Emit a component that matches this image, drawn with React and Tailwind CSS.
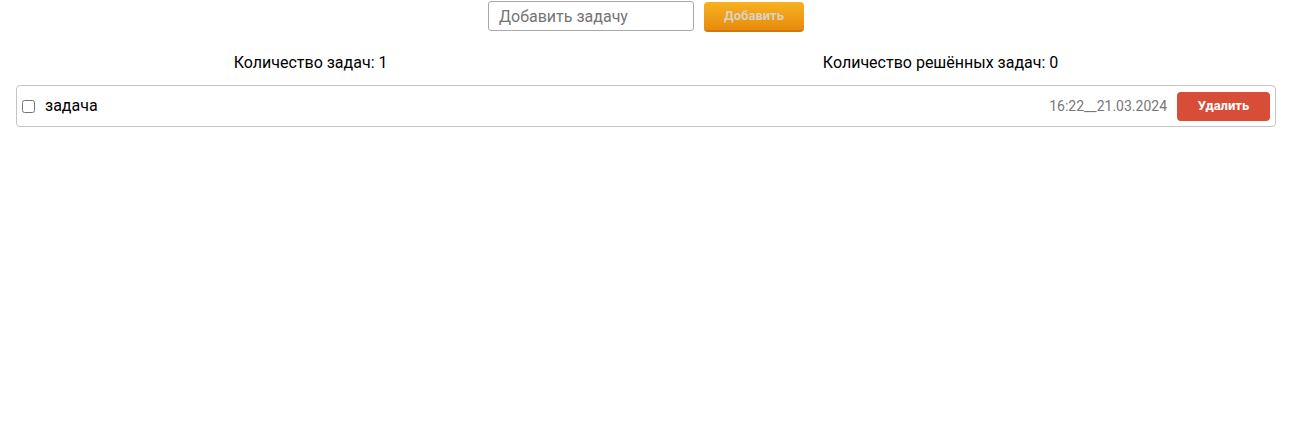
export default function App() {
  return (
    <div className="w-full bg-white text-black" style={{ fontFamily: "Roboto, 'Liberation Sans', sans-serif" }}>
      <div className="flex justify-center items-start gap-[10px] pr-1">
        <input
          type="text"
          placeholder="Добавить задачу"
          className="mt-[1px] w-[206px] h-[30px] border border-[#a9a9a9] rounded-[3px] px-[10px] text-[16px] text-black placeholder:text-[#757575] outline-none bg-white"
        />
        <button className="mt-[2px] w-[100px] h-[30px] rounded-[4px] bg-gradient-to-b from-[#f7b21f] to-[#e78b0d] border-b-2 border-[#d27708] text-[13px] font-bold text-[#d9d2c6]">
          Добавить
        </button>
      </div>
      <div className="ml-4 mr-5 mt-[19px] flex justify-around text-[16px] leading-[24px]">
        <span>Количество задач: 1</span>
        <span>Количество решённых задач: 0</span>
      </div>
      <div className="ml-4 mr-5 mt-[10px] h-[42px] border border-[#c4c4c4] rounded-[4px] flex items-center pl-[5px] pr-[5px]">
        <input type="checkbox" className="w-[13px] h-[13px] m-0" />
        <span className="ml-[10px] text-[16px]">задача</span>
        <span className="ml-auto text-[14px] text-[#777777]">16:22__21.03.2024</span>
        <button className="ml-[10px] w-[93px] h-[29px] rounded-[4px] bg-[#d84d38] text-white text-[13px] font-bold">
          Удалить
        </button>
      </div>
    </div>
  );
}
